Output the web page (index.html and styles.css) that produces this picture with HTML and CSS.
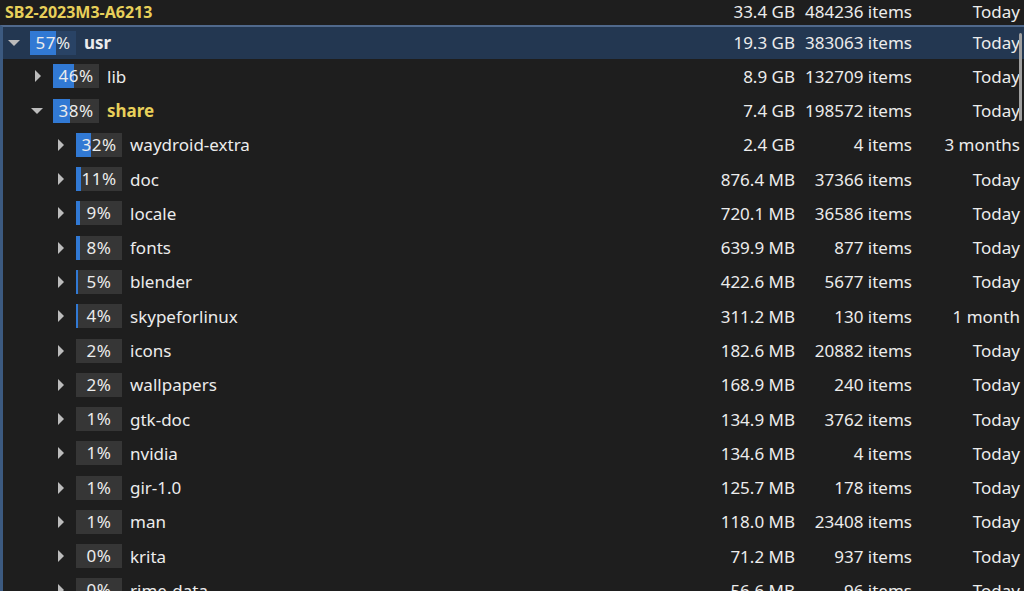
FILE: index.html
```html
<!DOCTYPE html>
<html lang="en">
  <head>
    <meta charset="UTF-8" />
    <title>Disk usage</title>
    <link rel="stylesheet" href="styles.css">
  </head>
  <body>
    <div class="view">
      <!-- Root summary -->
      <div class="row root">
        <div class="name-cell"><span class="root-name">SB2-2023M3-A6213</span></div>
        <div class="size">33.4 GB</div>
        <div class="count">484236 items</div>
        <div class="date">Today</div>
      </div>

      <div class="tree">
        <div class="row selected">
          <div class="name-cell lvl0"><span class="arrow down"></span><span class="pct"><i style="width:57%"></i><b>57%</b></span><span class="name bold">usr</span></div>
          <div class="size">19.3 GB</div>
          <div class="count">383063 items</div>
          <div class="date">Today</div>
        </div>
        <div class="row">
          <div class="name-cell lvl1"><span class="arrow right"></span><span class="pct"><i style="width:46%"></i><b>46%</b></span><span class="name">lib</span></div>
          <div class="size">8.9 GB</div>
          <div class="count">132709 items</div>
          <div class="date">Today</div>
        </div>
        <div class="row">
          <div class="name-cell lvl1"><span class="arrow down"></span><span class="pct"><i style="width:38%"></i><b>38%</b></span><span class="name bold yellow">share</span></div>
          <div class="size">7.4 GB</div>
          <div class="count">198572 items</div>
          <div class="date">Today</div>
        </div>
        <div class="row">
          <div class="name-cell lvl2"><span class="arrow right"></span><span class="pct"><i style="width:32%"></i><b>32%</b></span><span class="name">waydroid-extra</span></div>
          <div class="size">2.4 GB</div>
          <div class="count">4 items</div>
          <div class="date">3 months</div>
        </div>
        <div class="row">
          <div class="name-cell lvl2"><span class="arrow right"></span><span class="pct"><i style="width:11%"></i><b>11%</b></span><span class="name">doc</span></div>
          <div class="size">876.4 MB</div>
          <div class="count">37366 items</div>
          <div class="date">Today</div>
        </div>
        <div class="row">
          <div class="name-cell lvl2"><span class="arrow right"></span><span class="pct"><i style="width:9%"></i><b>9%</b></span><span class="name">locale</span></div>
          <div class="size">720.1 MB</div>
          <div class="count">36586 items</div>
          <div class="date">Today</div>
        </div>
        <div class="row">
          <div class="name-cell lvl2"><span class="arrow right"></span><span class="pct"><i style="width:8%"></i><b>8%</b></span><span class="name">fonts</span></div>
          <div class="size">639.9 MB</div>
          <div class="count">877 items</div>
          <div class="date">Today</div>
        </div>
        <div class="row">
          <div class="name-cell lvl2"><span class="arrow right"></span><span class="pct"><i style="width:5%"></i><b>5%</b></span><span class="name">blender</span></div>
          <div class="size">422.6 MB</div>
          <div class="count">5677 items</div>
          <div class="date">Today</div>
        </div>
        <div class="row">
          <div class="name-cell lvl2"><span class="arrow right"></span><span class="pct"><i style="width:4%"></i><b>4%</b></span><span class="name">skypeforlinux</span></div>
          <div class="size">311.2 MB</div>
          <div class="count">130 items</div>
          <div class="date">1 month</div>
        </div>
        <div class="row">
          <div class="name-cell lvl2"><span class="arrow right"></span><span class="pct"><b>2%</b></span><span class="name">icons</span></div>
          <div class="size">182.6 MB</div>
          <div class="count">20882 items</div>
          <div class="date">Today</div>
        </div>
        <div class="row">
          <div class="name-cell lvl2"><span class="arrow right"></span><span class="pct"><b>2%</b></span><span class="name">wallpapers</span></div>
          <div class="size">168.9 MB</div>
          <div class="count">240 items</div>
          <div class="date">Today</div>
        </div>
        <div class="row">
          <div class="name-cell lvl2"><span class="arrow right"></span><span class="pct"><b>1%</b></span><span class="name">gtk-doc</span></div>
          <div class="size">134.9 MB</div>
          <div class="count">3762 items</div>
          <div class="date">Today</div>
        </div>
        <div class="row">
          <div class="name-cell lvl2"><span class="arrow right"></span><span class="pct"><b>1%</b></span><span class="name">nvidia</span></div>
          <div class="size">134.6 MB</div>
          <div class="count">4 items</div>
          <div class="date">Today</div>
        </div>
        <div class="row">
          <div class="name-cell lvl2"><span class="arrow right"></span><span class="pct"><b>1%</b></span><span class="name">gir-1.0</span></div>
          <div class="size">125.7 MB</div>
          <div class="count">178 items</div>
          <div class="date">Today</div>
        </div>
        <div class="row">
          <div class="name-cell lvl2"><span class="arrow right"></span><span class="pct"><b>1%</b></span><span class="name">man</span></div>
          <div class="size">118.0 MB</div>
          <div class="count">23408 items</div>
          <div class="date">Today</div>
        </div>
        <div class="row">
          <div class="name-cell lvl2"><span class="arrow right"></span><span class="pct"><b>0%</b></span><span class="name">krita</span></div>
          <div class="size">71.2 MB</div>
          <div class="count">937 items</div>
          <div class="date">Today</div>
        </div>
        <div class="row">
          <div class="name-cell lvl2"><span class="arrow right"></span><span class="pct"><b>0%</b></span><span class="name">rime-data</span></div>
          <div class="size">56.6 MB</div>
          <div class="count">96 items</div>
          <div class="date">Today</div>
        </div>

        <!-- overlay scrollbar -->
        <div class="scroll-thumb"></div>
      </div>
    </div>
  </body>
</html>
```

FILE: styles.css
```css
* {
  margin: 0;
  padding: 0;
  box-sizing: border-box;
}

body,
html {
  height: 100%;
  overflow: hidden;
}

body {
  background-color: #1e1e1e;
  color: #ececec;
  font-family: "Noto Sans", "Open Sans", sans-serif;
  font-size: 17px;
}

.view {
  height: 100%;
}

.row {
  display: grid;
  grid-template-columns: minmax(0, 1fr) 120px 117px 108px;
  align-items: center;
  height: 34.27px;
  padding-right: 4px;
  white-space: nowrap;
}

.row.root {
  height: 25px;
  padding-bottom: 6px;
}

.root-name {
  padding-left: 5px;
  font-weight: bold;
  font-size: 16px;
  color: #e8d05a;
}

.size,
.count,
.date {
  text-align: right;
}

.tree {
  position: relative;
  height: 100%;
  border-top: 2px solid #50698c;
  border-left: 3px solid #3c5a80;
}

.row.selected {
  background-color: #233751;
  height: 32.27px;
  padding-bottom: 1px;
}

.name-cell {
  display: flex;
  align-items: center;
}

.lvl1 {
  padding-left: 23px;
}

.lvl2 {
  padding-left: 46px;
}

.arrow {
  width: 22px;
  height: 12px;
  display: flex;
  align-items: center;
  justify-content: center;
}

.arrow::before {
  content: "";
  display: block;
  width: 0;
  height: 0;
}

.arrow.right::before {
  border-top: 6px solid transparent;
  border-bottom: 6px solid transparent;
  border-left: 6px solid #bcbcbc;
  margin-left: 2px;
}

.arrow.down::before {
  border-left: 6px solid transparent;
  border-right: 6px solid transparent;
  border-top: 6px solid #bcbcbc;
  margin-top: 1px;
}

.pct {
  position: relative;
  width: 46px;
  height: 24px;
  margin-left: 5px;
  background-color: #363636;
  overflow: hidden;
}

.selected .pct {
  background-color: #294365;
}

.pct i {
  position: absolute;
  top: 0;
  left: 0;
  height: 100%;
  background-color: #3179d4;
}

.pct b {
  position: relative;
  display: block;
  text-align: center;
  font-weight: normal;
  line-height: 24px;
  letter-spacing: 0.5px;
}

.name {
  margin-left: 8px;
}

.name.bold {
  font-weight: bold;
}

.name.yellow {
  color: #e8d05a;
}

.scroll-thumb {
  position: absolute;
  top: 6px;
  right: 2px;
  width: 3px;
  height: 88px;
  border-radius: 2px;
  background-color: #a0a0a0;
}
```
